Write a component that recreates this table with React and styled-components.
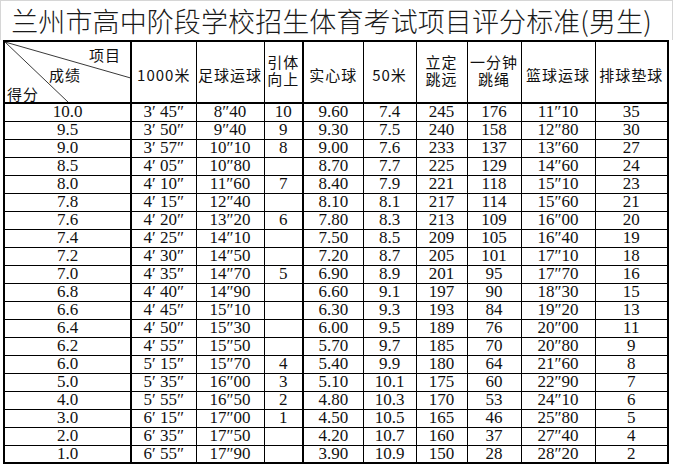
import React from 'react';
import styled, { createGlobalStyle } from 'styled-components';

const GlobalStyle = createGlobalStyle`
    html, body {
        margin: 0;
        padding: 0;
        background: #fff;
    }
`;

const Page = styled.div`
    width: 673px;
    height: 466px;
    overflow: hidden;
    background: #fff;
    color: #111;
`;

const Title = styled.div`
    box-sizing: border-box;
    height: 40px;
    width: 673px;
    border: 1px solid #d6d6d6;
    border-bottom: 0;
    padding-right: 10px;
    display: flex;
    align-items: center;
    justify-content: center;
    font-family: "Noto Sans CJK SC", "Noto Sans", sans-serif;
    font-weight: 300;
    font-size: 27px;
    letter-spacing: 0.1px;
    color: #1a1a1a;
`;

const Sheet = styled.table`
    margin-left: 3px;
    width: 664px;
    border-collapse: collapse;
    table-layout: fixed;
    border: 2px solid #000;
`;

const Col = styled.col`
    width: ${p => p.$w}px;
`;

const HeadRow = styled.tr`
    height: 62px;
`;

const Row = styled.tr`
    height: 18px;
`;

const HeadCell = styled.th`
    padding: ${p => (p.$lines === 2 ? '0 0 5px' : '4px 0 0')};
    border: 1px solid #000;
    border-bottom: 2px solid #000;
    border-right-width: ${p => (p.$thick ? 2 : 1)}px;
    font-family: "Noto Sans CJK SC", "Noto Sans", sans-serif;
    font-weight: 400;
    font-size: 15px;
    letter-spacing: 1px;
    line-height: 17px;
    text-align: center;
    vertical-align: middle;
    white-space: nowrap;
    overflow: hidden;
`;

const Corner = styled.th`
    position: relative;
    padding: 0;
    border: 1px solid #000;
    border-bottom: 2px solid #000;
    border-right-width: 2px;
`;

const Diagonals = styled.svg`
    position: absolute;
    left: 0;
    top: 0;
    width: 100%;
    height: 100%;
`;

const CornerLabel = styled.span`
    position: absolute;
    left: ${p => p.$x}px;
    top: ${p => p.$y}px;
    font-family: "Noto Sans CJK SC", "Noto Sans", sans-serif;
    font-weight: 400;
    font-size: 15px;
    letter-spacing: 1px;
    line-height: 16px;
    white-space: nowrap;
`;

const Cell = styled.td`
    padding: 0;
    border: 1px solid #000;
    border-right-width: ${p => (p.$thick ? 2 : 1)}px;
    font-family: "Liberation Serif", "Times New Roman", serif;
    font-size: 17px;
    line-height: 16px;
    text-align: center;
    vertical-align: middle;
    white-space: pre;
    overflow: hidden;
`;

const widths = [127, 65, 68, 39, 60, 53, 51, 54, 74, 73];
const thick = [0, 3];

const heads = [
    ['1000米'],
    ['足球运球'],
    ['引体', '向上'],
    ['实心球'],
    ['50米'],
    ['立定', '跳远'],
    ['一分钟', '跳绳'],
    ['篮球运球'],
    ['排球垫球'],
];

const rows = [
    ['10.0', '3′ 45″', '8″40', '10', '9.60', '7.4', '245', '176', '11″10', '35'],
    ['9.5', '3′ 50″', '9″40', '9', '9.30', '7.5', '240', '158', '12″80', '30'],
    ['9.0', '3′ 57″', '10″10', '8', '9.00', '7.6', '233', '137', '13″60', '27'],
    ['8.5', '4′ 05″', '10″80', '', '8.70', '7.7', '225', '129', '14″60', '24'],
    ['8.0', '4′ 10″', '11″60', '7', '8.40', '7.9', '221', '118', '15″10', '23'],
    ['7.8', '4′ 15″', '12″40', '', '8.10', '8.1', '217', '114', '15″60', '21'],
    ['7.6', '4′ 20″', '13″20', '6', '7.80', '8.3', '213', '109', '16″00', '20'],
    ['7.4', '4′ 25″', '14″10', '', '7.50', '8.5', '209', '105', '16″40', '19'],
    ['7.2', '4′ 30″', '14″50', '', '7.20', '8.7', '205', '101', '17″10', '18'],
    ['7.0', '4′ 35″', '14″70', '5', '6.90', '8.9', '201', '95', '17″70', '16'],
    ['6.8', '4′ 40″', '14″90', '', '6.60', '9.1', '197', '90', '18″30', '15'],
    ['6.6', '4′ 45″', '15″10', '', '6.30', '9.3', '193', '84', '19″20', '13'],
    ['6.4', '4′ 50″', '15″30', '', '6.00', '9.5', '189', '76', '20″00', '11'],
    ['6.2', '4′ 55″', '15″50', '', '5.70', '9.7', '185', '70', '20″80', '9'],
    ['6.0', '5′ 15″', '15″70', '4', '5.40', '9.9', '180', '64', '21″60', '8'],
    ['5.0', '5′ 35″', '16″00', '3', '5.10', '10.1', '175', '60', '22″90', '7'],
    ['4.0', '5′ 55″', '16″50', '2', '4.80', '10.3', '170', '53', '24″10', '6'],
    ['3.0', '6′ 15″', '17″00', '1', '4.50', '10.5', '165', '46', '25″80', '5'],
    ['2.0', '6′ 35″', '17″50', '', '4.20', '10.7', '160', '37', '27″40', '4'],
    ['1.0', '6′ 55″', '17″90', '', '3.90', '10.9', '150', '28', '28″20', '2'],
];

const App = () => (
    <Page>
        <GlobalStyle />
        <Title>兰州市高中阶段学校招生体育考试项目评分标准(男生)</Title>
        <Sheet>
            <colgroup>
                {widths.map((w, i) => <Col key={i} $w={w} />)}
            </colgroup>
            <thead>
                <HeadRow>
                    <Corner>
                        <Diagonals viewBox="0 0 127 62" preserveAspectRatio="none">
                            <line x1="0" y1="0" x2="127" y2="37" stroke="#333" strokeWidth="1" />
                            <line x1="0" y1="0" x2="64" y2="62" stroke="#333" strokeWidth="1" />
                        </Diagonals>
                        <CornerLabel $x={84} $y={5}>项目</CornerLabel>
                        <CornerLabel $x={44} $y={25}>成绩</CornerLabel>
                        <CornerLabel $x={2} $y={44}>得分</CornerLabel>
                    </Corner>
                    {heads.map((h, i) => (
                        <HeadCell key={i} $lines={h.length} $thick={thick.includes(i + 1)}>
                            {h.map((line, j) => (
                                <React.Fragment key={j}>
                                    {j > 0 && <br />}
                                    {line}
                                </React.Fragment>
                            ))}
                        </HeadCell>
                    ))}
                </HeadRow>
            </thead>
            <tbody>
                {rows.map((r, i) => (
                    <Row key={i}>
                        {r.map((v, j) => (
                            <Cell key={j} $thick={thick.includes(j)}>{v}</Cell>
                        ))}
                    </Row>
                ))}
            </tbody>
        </Sheet>
    </Page>
);

export default App;
